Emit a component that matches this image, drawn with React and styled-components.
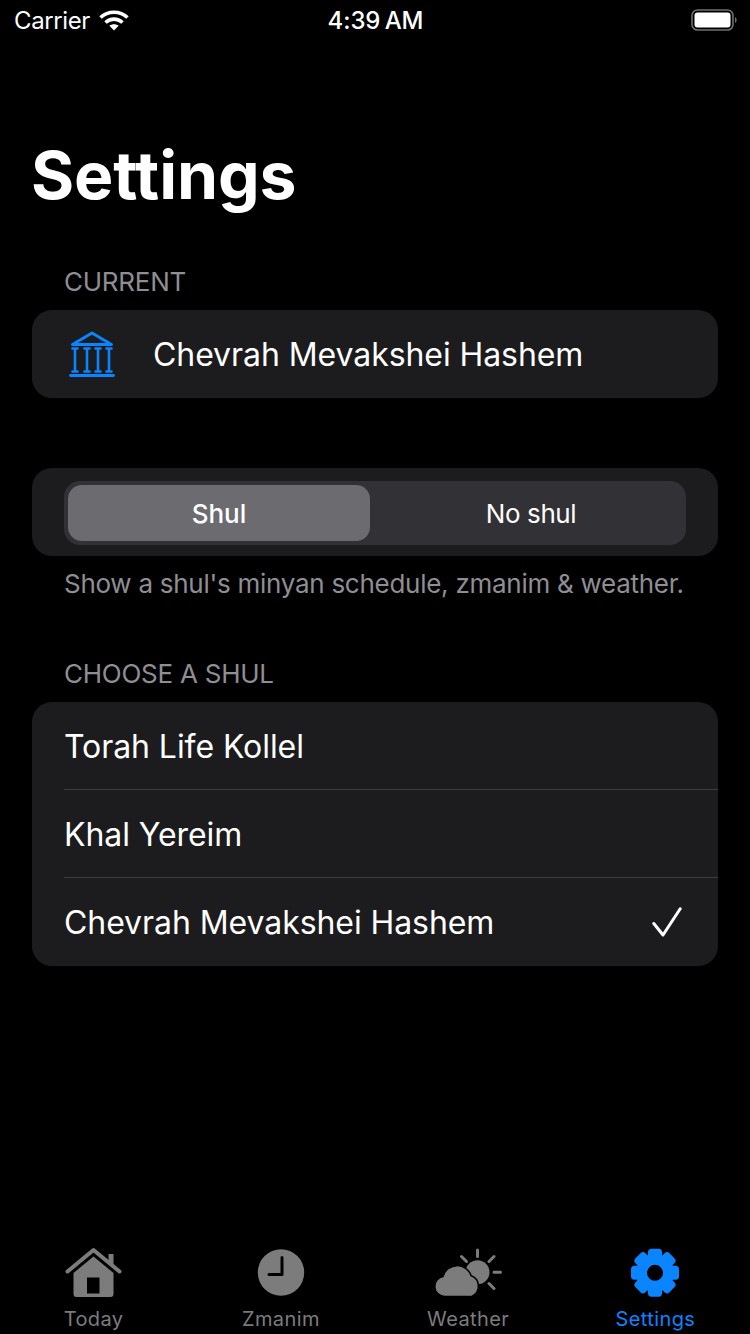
import styled, { createGlobalStyle } from "styled-components";

const GlobalStyle = createGlobalStyle`
    html, body {
        margin: 0;
        padding: 0;
        background: #000;
    }
    * {
        box-sizing: border-box;
    }
`

const Screen = styled.div`
    width: 750px;
    height: 1334px;
    background: #000;
    color: #fff;
    font-family: Inter, "Liberation Sans", sans-serif;
    display: flex;
    flex-direction: column;
    overflow: hidden;
`

const StatusBar = styled.div`
    height: 40px;
    padding: 0 13px 0 14px;
    display: grid;
    grid-template-columns: 1fr auto 1fr;
    align-items: center;
`
const Carrier = styled.div`
    display: flex;
    align-items: center;
    gap: 9px;
    font-size: 24px;
    letter-spacing: -0.4px;
`
const Clock = styled.div`
    font-size: 24px;
    font-weight: 500;
    letter-spacing: -0.1px;
    word-spacing: -2px;
`
const Battery = styled.div`
    justify-self: end;
    display: flex;
`

const Main = styled.div`
    flex: 1;
    padding: 0 32px;
`
const Title = styled.h1`
    margin: 92px 0 0 -1px;
    font-size: 66px;
    line-height: 86px;
    font-weight: 700;
    letter-spacing: -0.1px;
`
const SectionLabel = styled.div`
    margin: ${props => props.$top}px 0 0;
    padding-left: 32px;
    height: 28px;
    line-height: 28px;
    color: #8e8e93;
    font-size: 26px;
    letter-spacing: -0.25px;
`
const Card = styled.div`
    margin-top: ${props => props.$top || 0}px;
    background: #1c1c1e;
    border-radius: 20px;
    overflow: hidden;
`
const Row = styled.div`
    height: 88px;
    display: flex;
    align-items: center;
    margin-left: 32px;
    padding: ${props => props.$divided ? "1px" : "0"} 36px 0 0;
    font-size: 32px;
    letter-spacing: -0.07px;
    border-bottom: ${props => props.$divided ? "1px solid #3d3d41" : "none"};
`
const RowName = styled.div`
    flex: 1;
`
const CurrentRow = styled(Row)`
    margin-left: 37px;
    gap: 38px;
`
const SegmentCard = styled(Card)`
    padding: 13px 32px;
    height: 88px;
    margin-top: 70px;
`
const Segmented = styled.div`
    height: 64px;
    padding: 4px 0 4px 4px;
    border-radius: 16px;
    background: #323236;
    display: grid;
    grid-template-columns: 302px 1fr;
    gap: 6px;
`
const Segment = styled.div`
    display: flex;
    align-items: center;
    justify-content: center;
    border-radius: 14px;
    font-size: 26px;
    font-weight: ${props => props.$active ? 500 : 400};
    letter-spacing: ${props => props.$active ? 0 : -0.4}px;
    background: ${props => props.$active ? "#6c6c70" : "transparent"};
`
const Footnote = styled.div`
    margin-top: 12px;
    padding-left: 32px;
    height: 32px;
    line-height: 32px;
    color: #8e8e93;
    font-size: 26px;
    letter-spacing: -0.27px;
    white-space: nowrap;
`

const TabBar = styled.div`
    height: 98px;
    padding: 4px 1px 0 0;
    display: grid;
    grid-template-columns: repeat(4, 1fr);
`
const Tab = styled.div`
    display: flex;
    flex-direction: column;
    align-items: center;
    color: ${props => props.$active ? "#0a84ff" : "#7c7c7c"};
`
const TabIcon = styled.svg`
    width: 80px;
    height: 60px;
    display: block;
`
const TabLabel = styled.div`
    margin-top: 7px;
    height: 24px;
    line-height: 24px;
    font-size: 20px;
    font-weight: 400;
    letter-spacing: 0.4px;
`

const WifiIcon = () => (
    <svg width="30" height="22" viewBox="0 0 30 22" fill="none" stroke="#fff" strokeWidth="3.6">
        <path d="M1.500 8.500C9 1.500 21 1.500 28.500 8.500" />
        <path d="M6.500 13.500C11.500 9 18.500 9 23.500 13.500" />
        <path d="M15 21.500l-4.600-4.800c2.600-2 6.600-2 9.200 0z" fill="#fff" stroke="none" />
    </svg>
)

const BatteryIcon = () => (
    <svg width="46" height="22" viewBox="0 0 46 22">
        <rect x="1" y="1" width="41" height="20" rx="5.500" fill="none" stroke="#6f6f6f" strokeWidth="1.600" />
        <rect x="3.500" y="3.500" width="36" height="15" rx="3" fill="#fff" />
        <path d="M44 8v6c1-.4 1.600-1.600 1.600-3S45 8.400 44 8z" fill="#6f6f6f" />
    </svg>
)

const ShulIcon = () => (
    <svg width="46" height="46" viewBox="0 0 46 46" fill="none" stroke="#0a84ff" strokeLinecap="round">
        <path d="M3.500 13.500L23 2l19.500 11.500z" strokeWidth="3" strokeLinejoin="round" />
        {[6, 18, 29, 40].map(x => (
            <path key={x} d={`M${x} 18v22M${x - 2.5} 17.500h5M${x - 2.5} 40.500h5`} strokeWidth="2.600" />
        ))}
        <path d="M1.500 44.500h43" strokeWidth="2.800" />
    </svg>
)

const CheckIcon = () => (
    <svg width="30" height="30" viewBox="0 0 30 30" fill="none" stroke="#fff" strokeWidth="3" strokeLinecap="round" strokeLinejoin="round">
        <path d="M1.800 16.500L11 28 28.200 1.800" />
    </svg>
)

const HomeIcon = () => (
    <TabIcon viewBox="0 0 80 60">
        <path d="M54.500 14h5v12l-5-4z" fill="currentColor" />
        <path d="M13.500 31.500L39.500 10l26 21.500" fill="none" stroke="currentColor" strokeWidth="4" strokeLinecap="round" strokeLinejoin="round" />
        <path fillRule="evenodd" fill="currentColor" d="M39.500 16.500L59.500 33v21a3 3 0 0 1-3 3h-34a3 3 0 0 1-3-3V33zM33 37.500v16h12.500v-16z" />
    </TabIcon>
)

const ClockIcon = () => (
    <TabIcon viewBox="0 0 80 60">
        <circle cx="40" cy="32.500" r="23.200" fill="currentColor" />
        <path d="M41 17.500v17H28" fill="none" stroke="#000" strokeWidth="3" strokeLinecap="round" strokeLinejoin="round" />
    </TabIcon>
)

const WeatherIcon = () => (
    <TabIcon viewBox="0 0 80 60">
        <g stroke="currentColor" strokeWidth="3" strokeLinecap="round">
            <path d="M49.500 10v6.500M33.500 16.500l5 5M66 16.500l-5 5M66 32.300h6.500M61 43.500l5 5" />
        </g>
        <circle cx="49.500" cy="32.300" r="12" fill="currentColor" />
        <path d="M17 55.700a9.300 9.300 0 0 1-1.500-18.500a14 14 0 0 1 27-1a10.500 10.500 0 0 1 1 19.500z" fill="currentColor" stroke="#000" strokeWidth="3" paintOrder="stroke" />
    </TabIcon>
)

const GearIcon = () => {
    const teeth = [0, 45, 90, 135, 180, 225, 270, 315]
    return (
        <TabIcon viewBox="0 0 80 60">
            <g fill="currentColor">
                {teeth.map(angle => (
                    <rect key={angle} x="33" y="8.800" width="14" height="12" rx="3.500" transform={`rotate(${angle} 40 32.800)`} />
                ))}
            </g>
            <circle cx="40" cy="32.800" r="13.500" fill="none" stroke="currentColor" strokeWidth="11" />
        </TabIcon>
    )
}

const shuls = ["Torah Life Kollel", "Khal Yereim", "Chevrah Mevakshei Hashem"]

const App = () => {
    return (
        <Screen>
            <GlobalStyle />
            <StatusBar>
                <Carrier>Carrier <WifiIcon /></Carrier>
                <Clock>4:39 AM</Clock>
                <Battery><BatteryIcon /></Battery>
            </StatusBar>
            <Main>
                <Title>Settings</Title>
                <SectionLabel $top={50}>CURRENT</SectionLabel>
                <Card $top={14}>
                    <CurrentRow>
                        <ShulIcon />
                        <RowName>Chevrah Mevakshei Hashem</RowName>
                    </CurrentRow>
                </Card>
                <SegmentCard>
                    <Segmented>
                        <Segment $active>Shul</Segment>
                        <Segment>No shul</Segment>
                    </Segmented>
                </SegmentCard>
                <Footnote>Show a shul's minyan schedule, zmanim &amp; weather.</Footnote>
                <SectionLabel $top={60}>CHOOSE A SHUL</SectionLabel>
                <Card $top={14}>
                    {shuls.map((name, i) => (
                        <Row key={name} $divided={i < 2}>
                            <RowName>{name}</RowName>
                            {i === 2 && <CheckIcon />}
                        </Row>
                    ))}
                </Card>
            </Main>
            <TabBar>
                <Tab><HomeIcon /><TabLabel>Today</TabLabel></Tab>
                <Tab><ClockIcon /><TabLabel>Zmanim</TabLabel></Tab>
                <Tab><WeatherIcon /><TabLabel>Weather</TabLabel></Tab>
                <Tab $active><GearIcon /><TabLabel>Settings</TabLabel></Tab>
            </TabBar>
        </Screen>
    );
}

export default App;
